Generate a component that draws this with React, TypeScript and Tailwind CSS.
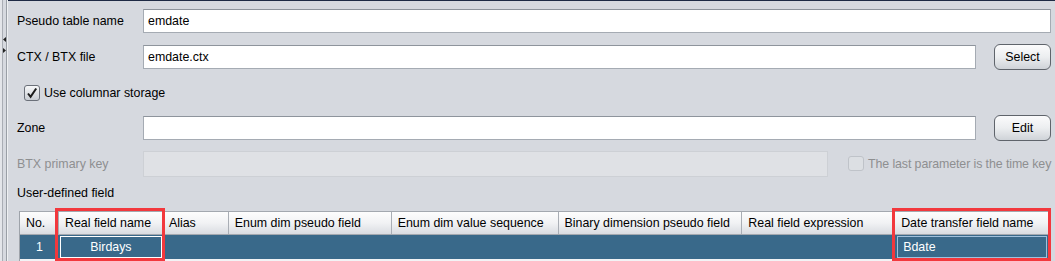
import React from "react";

// Nimbus-style pseudo table form
const cols = [
  { name: "No.", w: 39 },
  { name: "Real field name", w: 104 },
  { name: "Alias", w: 66 },
  { name: "Enum dim pseudo field", w: 163 },
  { name: "Enum dim value sequence", w: 167 },
  { name: "Binary dimension pseudo field", w: 184 },
  { name: "Real field expression", w: 153 },
  { name: "Date transfer field name", w: 155 },
];

function Field({ value, disabled }: { value?: string; disabled?: boolean }) {
  return (
    <div
      className={
        disabled
          ? "flex-1 min-w-0 h-[26px] border border-[#cdd0d5] bg-[#dfe1e5]"
          : "flex-1 min-w-0 h-[24px] border border-[#a5abb3] border-t-[#8e949c] bg-white flex items-center pl-[4px] text-black"
      }
    >
      {value}
    </div>
  );
}

function Btn({ label }: { label: string }) {
  return (
    <button className="w-[57px] shrink-0 h-[26px] rounded-[6px] border border-[#5f646b] bg-gradient-to-b from-[#fbfbfc] via-[#eceef0] to-[#cfd3d8] text-black text-[12.4px] leading-none">
      {label}
    </button>
  );
}

function CheckBox({ checked, disabled }: { checked?: boolean; disabled?: boolean }) {
  return (
    <div
      className={
        disabled
          ? "w-[16px] h-[15px] shrink-0 rounded-[3px] border border-[#bfc3c9] bg-[#dcdfe3]"
          : "w-[16px] h-[16px] shrink-0 rounded-[3px] border border-[#6b7079] bg-gradient-to-b from-[#f7f8f9] to-[#c9cdd3] flex items-center justify-center"
      }
    >
      {checked && (
        <svg width="12" height="12" viewBox="0 0 12 12">
          <path d="M2 6.5 L4.6 9.8 L10.2 1.5" fill="none" stroke="#1b1b1b" strokeWidth="2" />
        </svg>
      )}
    </div>
  );
}

export default function App() {
  return (
    <div
      className="w-[1055px] h-[261px] overflow-hidden bg-[#d6d9df] flex text-[12.4px] text-black"
      style={{ fontFamily: '"Liberation Sans", Arial, sans-serif' }}
    >
      {/* split pane divider */}
      <div className="w-[8px] h-full flex shrink-0">
        <div className="w-[2px] bg-[#e3e5e9]" />
        <div className="w-[1px] bg-[#a9adb4]" />
        <div className="w-[3px] relative">
          <svg className="absolute left-0 top-[37px]" width="3" height="5" viewBox="0 0 3 5">
            <path d="M3 0 L0 2.5 L3 5 Z" fill="#222" />
          </svg>
          <svg className="absolute left-0 top-[48px]" width="3" height="5" viewBox="0 0 3 5">
            <path d="M0 0 L3 2.5 L0 5 Z" fill="#222" />
          </svg>
        </div>
        <div className="w-[1px] bg-[#9a9fa6]" />
        <div className="w-[1px] bg-[#eef0f2]" />
      </div>

      <div className="flex-1 min-w-0 border-t border-[#1e2a44] pl-[9px] pr-[4px] relative">
        {/* Pseudo table name */}
        <div className="flex items-center mt-[8px] h-[24px]">
          <div className="w-[126px] shrink-0">Pseudo table name</div>
          <Field value="emdate" />
        </div>

        {/* CTX / BTX file */}
        <div className="flex items-center mt-[11px] h-[26px]">
          <div className="w-[126px] shrink-0">CTX / BTX file</div>
          <Field value="emdate.ctx" />
          <div className="w-[18px] shrink-0" />
          <Btn label="Select" />
        </div>

        {/* Use columnar storage */}
        <div className="flex items-center mt-[15px] h-[16px] pl-[7px] gap-[4px]">
          <CheckBox checked />
          <span>Use columnar storage</span>
        </div>

        {/* Zone */}
        <div className="flex items-center mt-[14px] h-[26px]">
          <div className="w-[126px] shrink-0">Zone</div>
          <Field />
          <div className="w-[18px] shrink-0" />
          <Btn label="Edit" />
        </div>

        {/* BTX primary key */}
        <div className="flex items-center mt-[10px] h-[26px]">
          <div className="w-[126px] shrink-0 text-[#8e8f91]">BTX primary key</div>
          <div className="w-[685px] shrink-0 flex h-[26px]">
            <Field disabled />
          </div>
          <div className="ml-[20px] flex items-center gap-[4px] whitespace-nowrap">
            <CheckBox disabled />
            <span className="text-[#8e8f91] tracking-[-0.1px]">The last parameter is the time key</span>
          </div>
        </div>

        {/* User-defined field */}
        <div className="mt-[8px] h-[16px] flex items-center">User-defined field</div>

        {/* table */}
        <div className="mt-[10px] ml-[2px] w-[1031px] border-l border-[#9ea3aa]">
          <div className="flex h-[24px] bg-gradient-to-b from-[#fdfdfd] via-[#f1f2f4] to-[#d9dce1] border-t border-b border-[#a3a8af]">
            {cols.map((c, i) => (
              <div
                key={c.name}
                className={
                  i === cols.length - 1
                    ? "flex items-center pl-[6px] whitespace-nowrap overflow-hidden"
                    : "flex items-center pl-[6px] whitespace-nowrap overflow-hidden border-r border-[#a9aeb5]"
                }
                style={{ width: c.w }}
              >
                {c.name}
              </div>
            ))}
          </div>
          <div className="flex h-[24px] bg-[#39698a] text-white">
            <div className="w-[39px] flex items-center justify-center">1</div>
            <div className="w-[104px] flex items-center justify-center py-[1px] px-[1px]">
              <div className="w-full h-full border border-white flex items-center justify-center">Birdays</div>
            </div>
            <div className="w-[66px]" />
            <div className="w-[163px]" />
            <div className="w-[167px]" />
            <div className="w-[184px]" />
            <div className="w-[153px]" />
            <div className="w-[155px] py-[1px] pl-[2px] pr-[3px]">
              <div className="w-full h-full border border-[#9fc0dc] flex items-center pl-[5px]">Bdate</div>
            </div>
          </div>
          <div className="h-[3px] bg-[#f2f3f5]" />
        </div>

        {/* highlight boxes */}
        <div className="absolute left-[47px] top-[207px] w-[110px] h-[53px] border-[3px] border-[#f2383d]" />
        <div className="absolute left-[884px] top-[207px] w-[159px] h-[53px] border-[3px] border-[#f2383d]" />
      </div>
    </div>
  );
}
